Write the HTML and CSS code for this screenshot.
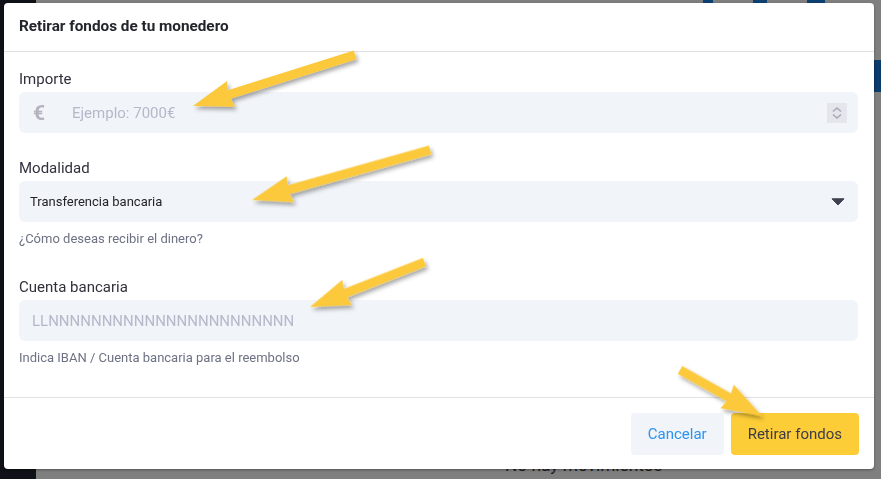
FILE: index.html
```html
<!DOCTYPE html>
<html lang="es">
<head>
  <meta charset="UTF-8" />
  <meta name="viewport" content="width=device-width, initial-scale=1.0"/>
  <title>Retirar fondos</title>
  <link rel="stylesheet" href="styles.css">
</head>
<body>
  <div class="page">
    <aside class="sidebar"></aside>
    <div class="content">
      <div class="topbar">
        <span class="tb-icon"></span>
        <span class="tb-icon wide"></span>
        <span class="tb-icon wider"></span>
      </div>
      <div class="toolbar">
        <span class="page-btn"></span>
      </div>
      <p class="empty">No hay movimientos</p>
    </div>
  </div>

  <div class="backdrop"></div>

  <div class="modal">
    <div class="modal-header">
      <h2>Retirar fondos de tu monedero</h2>
    </div>

    <div class="modal-body">
      <div class="field">
        <label>Importe</label>
        <div class="control">
          <span class="euro">€</span>
          <input type="text" placeholder="Ejemplo: 7000€" />
          <span class="spinner">
            <svg width="20" height="20" viewBox="0 0 20 20">
              <path d="M6 8.5 L10 5 L14 8.5" fill="none" stroke="#a9a9b8" stroke-width="1.6"/>
              <path d="M6 11.5 L10 15 L14 11.5" fill="none" stroke="#a9a9b8" stroke-width="1.6"/>
            </svg>
          </span>
        </div>
      </div>

      <div class="field">
        <label>Modalidad</label>
        <div class="control select">
          <span class="select-value">Transferencia bancaria</span>
          <svg class="caret" width="14" height="8" viewBox="0 0 14 8">
            <path d="M1 0.8 H13 L7 7 Z" fill="#3d4150" stroke="#3d4150" stroke-linejoin="round"/>
          </svg>
        </div>
        <p class="help">¿Cómo deseas recibir el dinero?</p>
      </div>

      <div class="field">
        <label>Cuenta bancaria</label>
        <div class="control">
          <input type="text" class="iban" placeholder="LLNNNNNNNNNNNNNNNNNNNNNNN" />
        </div>
        <p class="help">Indica IBAN / Cuenta bancaria para el reembolso</p>
      </div>
    </div>

    <div class="modal-footer">
      <button class="btn btn-light">Cancelar</button>
      <button class="btn btn-yellow">Retirar fondos</button>
    </div>
  </div>

  <!-- flechas de anotación -->
  <svg class="arrows" width="881" height="479" viewBox="0 0 881 479">
    <defs>
      <filter id="sh" x="-20%" y="-40%" width="140%" height="180%">
        <feDropShadow dx="2" dy="3" stdDeviation="2" flood-color="#000" flood-opacity="0.35"/>
      </filter>
    </defs>
    <g fill="#fbc93b" filter="url(#sh)">
      <polygon transform="translate(193 106) rotate(-17.5)" points="0,0 40,-13.5 38,-4.5 170,-4.5 170,4.5 38,4.5 40,13.5"/>
      <polygon transform="translate(252 200) rotate(-15.7)" points="0,0 40,-13.5 38,-4.5 185,-4.5 185,4.5 38,4.5 40,13.5"/>
      <polygon transform="translate(310 307) rotate(-21.4)" points="0,0 40,-13.5 38,-4.5 123,-4.5 123,4.5 38,4.5 40,13.5"/>
      <polygon transform="translate(762 416) rotate(209.3)" points="0,0 40,-13.5 38,-4.5 94,-4.5 94,4.5 38,4.5 40,13.5"/>
    </g>
  </svg>
</body>
</html>
```

FILE: styles.css
```css
* {
  margin: 0;
  padding: 0;
  box-sizing: border-box;
}

body {
  width: 881px;
  height: 479px;
  overflow: hidden;
  font-family: Roboto, "Liberation Sans", sans-serif;
  background: #fff;
}

/* pagina de fondo */
.page {
  display: flex;
  height: 479px;
}

.sidebar {
  width: 36px;
  background: #1d222e;
}

.content {
  flex: 1;
  display: flex;
  flex-direction: column;
  overflow: hidden;
}

.topbar {
  display: flex;
  gap: 40px;
  padding-left: 667px;
  height: 6px;
}

.tb-icon {
  width: 10px;
  height: 6px;
  background: #1680e0;
}

.tb-icon.wide {
  width: 14px;
}

.tb-icon.wider {
  width: 18px;
}

.toolbar {
  display: flex;
  justify-content: flex-end;
  margin-top: 54px;
  margin-right: -70px;
}

.page-btn {
  display: block;
  height: 32px;
  width: 80px;
  background: #1578d8;
}

.empty {
  margin-top: 363px;
  padding-left: 469px;
  font-size: 17.3px;
  line-height: 20px;
  color: #3a3a3a;
}

.backdrop {
  position: fixed;
  inset: 0;
  background: rgba(0, 0, 0, 0.5);
}

/* modal */
.modal {
  position: fixed;
  left: 4px;
  top: 3px;
  width: 870px;
  background: #fff;
  border-radius: 4px;
  box-shadow: 0 1px 3px rgba(0, 0, 0, 0.35);
}

.modal-header {
  padding: 13px 15px 15px;
  border-bottom: 1px solid #e0e1e5;
}

.modal-header h2 {
  font-size: 15.3px;
  line-height: 20px;
  font-weight: 700;
  color: #24252c;
}

.modal-body {
  display: flex;
  flex-direction: column;
  gap: 25px;
  padding: 17px 16px 26px 15px;
}

.field {
  display: flex;
  flex-direction: column;
}

.field label {
  font-size: 15px;
  line-height: 20px;
  color: #30313b;
  margin-bottom: 3px;
}

.control {
  display: flex;
  align-items: center;
  height: 41px;
  background: #f1f4f8;
  border-radius: 6px;
}

.euro {
  width: 53px;
  padding-left: 14px;
  font-size: 21px;
  font-weight: 700;
  color: #b4b4c1;
}

.control input {
  flex: 1;
  height: 100%;
  border: none;
  outline: none;
  background: transparent;
  font-family: inherit;
  font-size: 15px;
  color: #30313b;
}

.control input::placeholder {
  color: #b6b8ca;
}

.control input.iban {
  padding-left: 13px;
}

.spinner {
  display: flex;
  width: 20px;
  height: 20px;
  margin-right: 11px;
  background: #e5e6ec;
}

.select {
  justify-content: space-between;
  padding: 0 13px 0 11px;
}

.select-value {
  font-size: 13px;
  color: #23242b;
}

.help {
  margin: 8px 0 4px;
  font-size: 13px;
  line-height: 18px;
  color: #6d7183;
}

.modal-footer {
  display: flex;
  justify-content: flex-end;
  gap: 7px;
  padding: 15px 15px 14px;
  border-top: 1px solid #e0e1e5;
}

.btn {
  height: 42px;
  padding: 0 17px;
  border: none;
  border-radius: 4px;
  font-family: inherit;
  font-size: 15px;
  cursor: pointer;
}

.btn-light {
  background: #f1f4f8;
  color: #2a93f3;
}

.btn-yellow {
  background: #fdcd38;
  color: #3b3b48;
}

.arrows {
  position: fixed;
  left: 0;
  top: 0;
  pointer-events: none;
}
```
